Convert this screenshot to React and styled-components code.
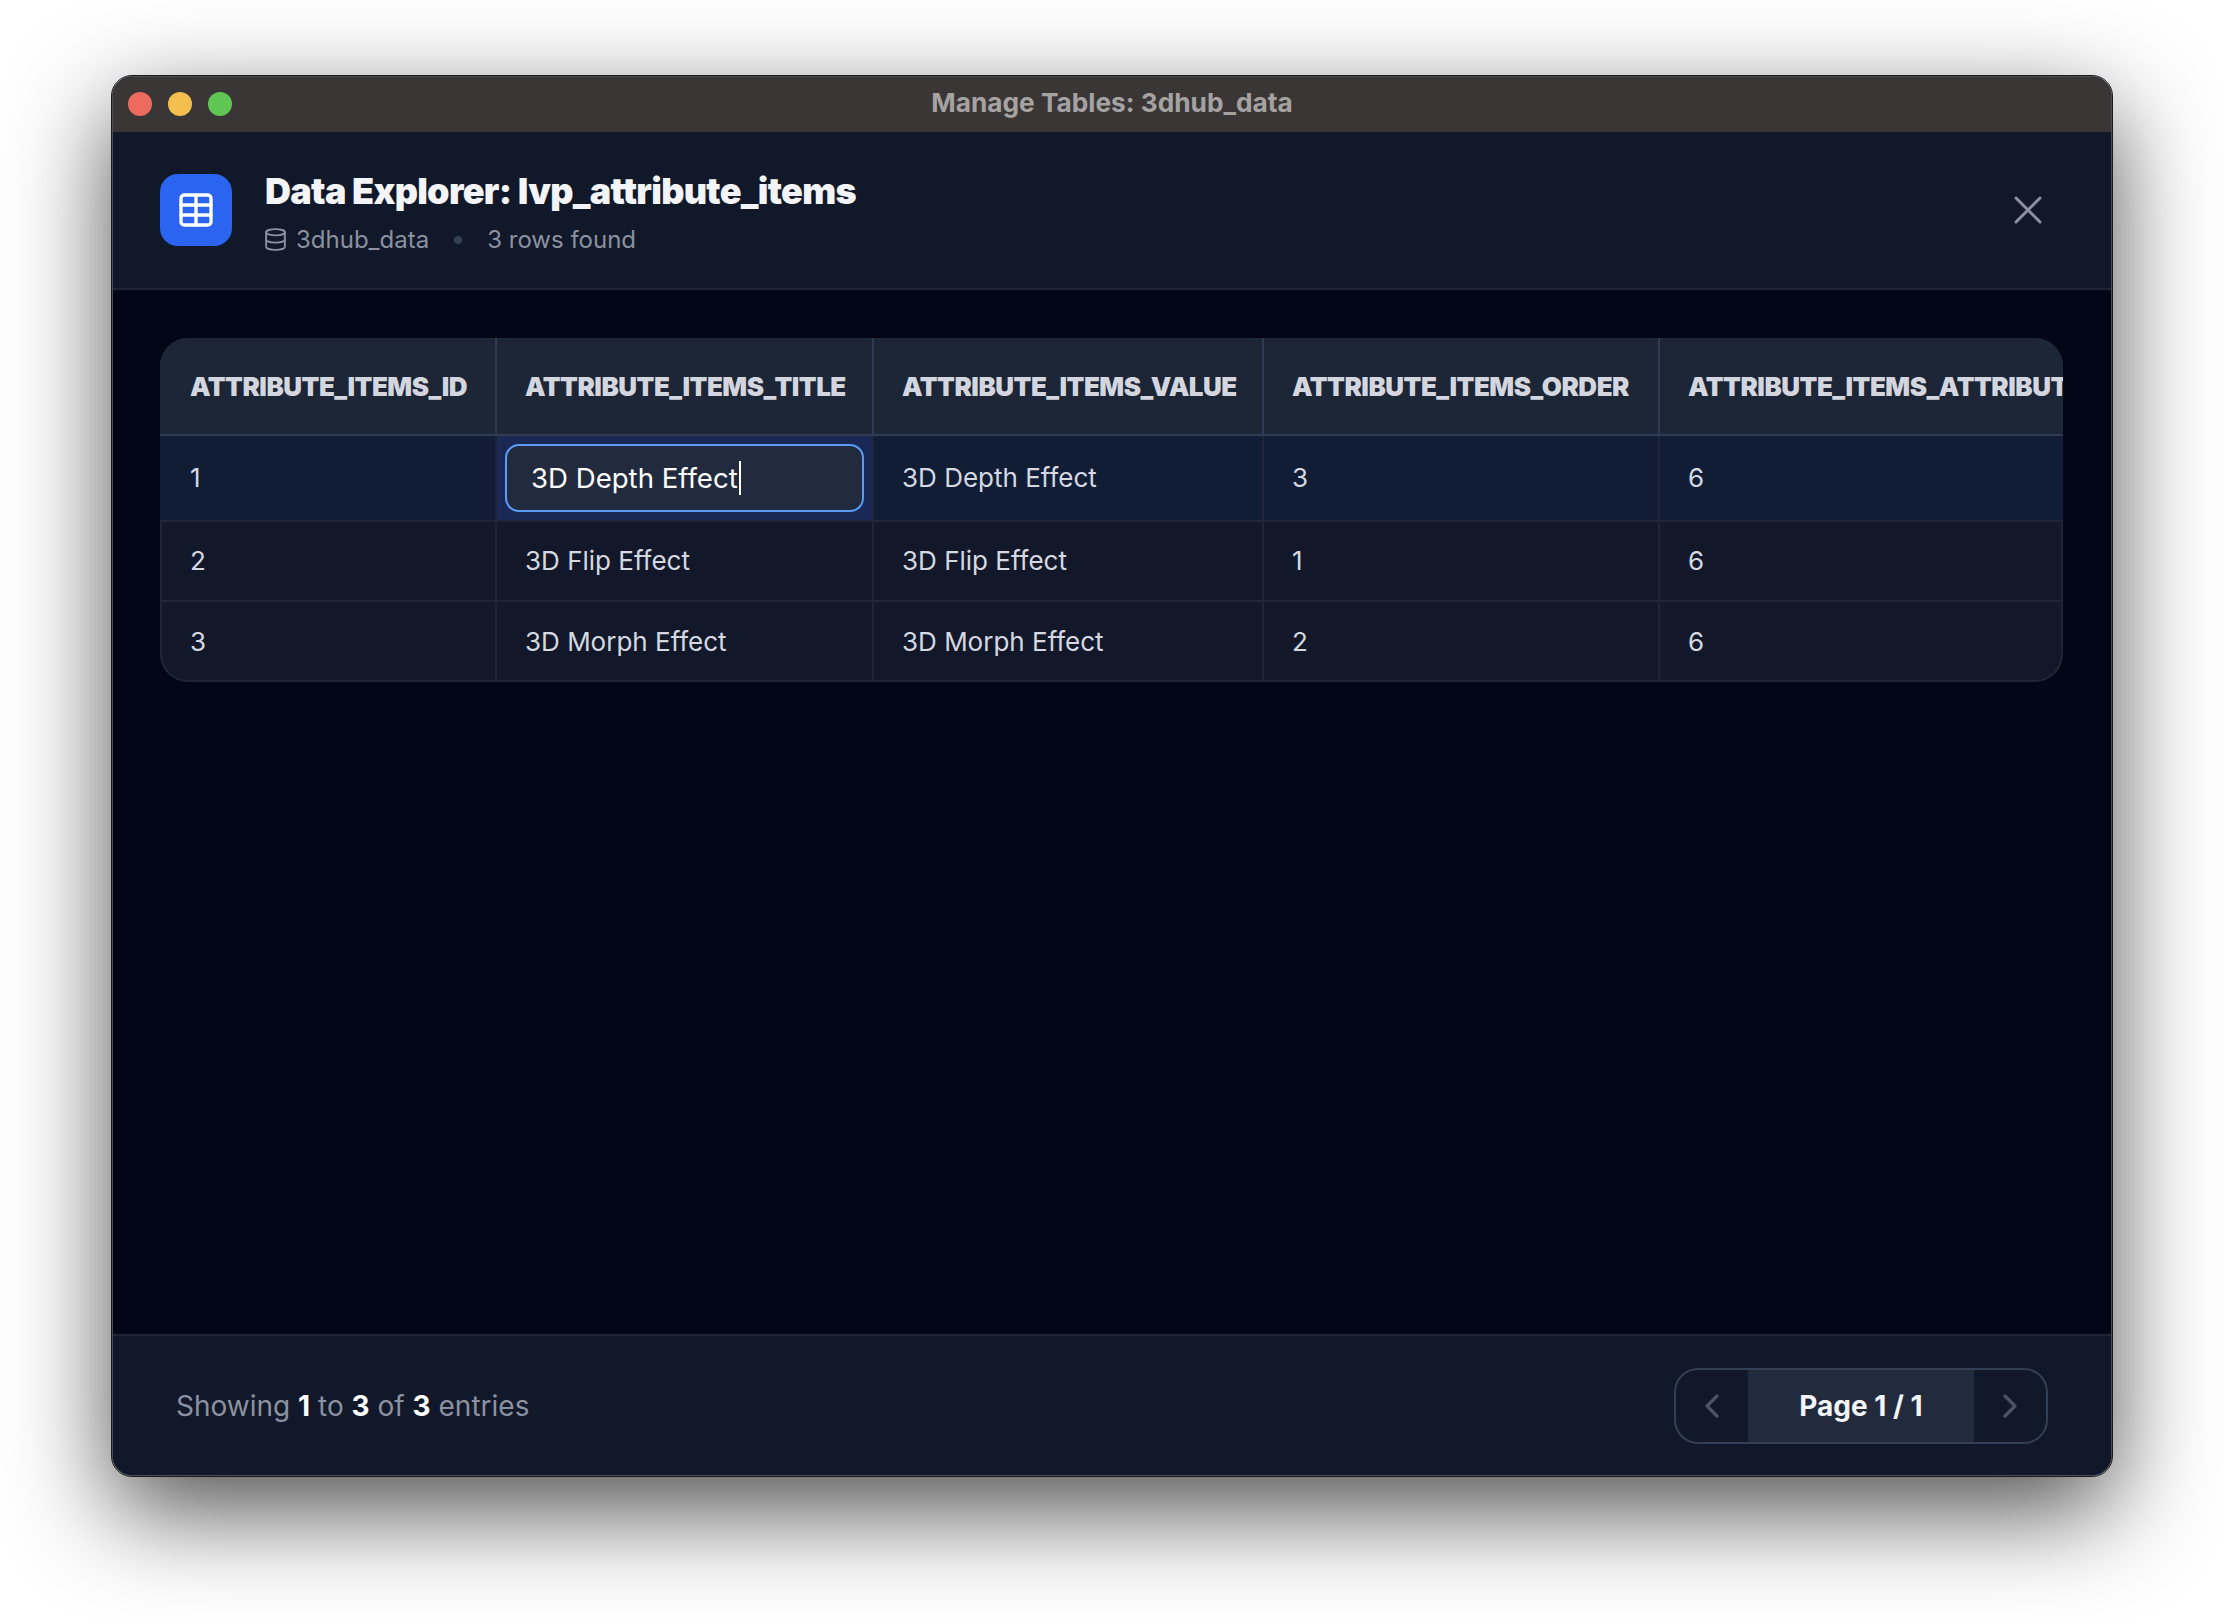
import React from 'react';
import styled, { createGlobalStyle } from 'styled-components';
import { Table, Database, X, ChevronLeft, ChevronRight } from 'lucide-react';

const Global = createGlobalStyle`
  html, body { margin: 0; padding: 0; background: #ffffff; }
  body { font-family: Inter, "Noto Sans", sans-serif; -webkit-font-smoothing: antialiased; }
`;

const Page = styled.div`
  width: 2224px;
  height: 1624px;
  box-sizing: border-box;
  padding: 76px 112px 148px 112px;
  overflow: hidden;
`;

const Window = styled.div`
  height: 100%;
  display: flex;
  flex-direction: column;
  box-sizing: border-box;
  border-radius: 20px;
  overflow: hidden;
  border: 1px solid #4a4d57;
  outline: 1px solid #1a1a1c;
  background: #020617;
  box-shadow: 0 34px 100px rgba(0, 0, 0, 0.7);
`;

const TitleBar = styled.div`
  flex: 0 0 55px;
  position: relative;
  display: flex;
  align-items: center;
  justify-content: center;
  padding-bottom: 4px;
  box-sizing: border-box;
  background: #3b3636;
`;

const Lights = styled.div`
  position: absolute;
  left: 15px;
  top: 15px;
  display: flex;
  gap: 16px;
`;

const Light = styled.span`
  width: 24px;
  height: 24px;
  border-radius: 50%;
  background: ${(p) => p.$color};
`;

const WindowTitle = styled.div`
  font-size: 26.25px;
  font-weight: 700;
  color: #a5a2a2;
`;

const Header = styled.header`
  flex: 0 0 158px;
  box-sizing: border-box;
  display: flex;
  align-items: center;
  padding: 0 59px 0 47px;
  gap: 33px;
  background: #111829;
  border-bottom: 2px solid #1e2636;
`;

const IconTile = styled.div`
  width: 72px;
  height: 72px;
  border-radius: 18px;
  background: #2b64f1;
  color: #fff;
  display: flex;
  align-items: center;
  justify-content: center;
`;

const HeaderText = styled.div`
  flex: 1;
  display: flex;
  flex-direction: column;
  gap: 9px;
  padding-top: 2px;
`;

const Title = styled.h1`
  margin: 0;
  font-size: 36px;
  line-height: 48px;
  font-weight: 900;
  letter-spacing: -0.72px;
  color: #f3f4f7;
`;

const Meta = styled.div`
  display: flex;
  align-items: center;
  font-size: 24px;
  line-height: 32px;
  color: #8b91a0;
`;

const MetaDb = styled.span`
  display: flex;
  align-items: center;
  gap: 8px;
  margin-left: -2px;
`;

const Dot = styled.span`
  width: 8px;
  height: 8px;
  border-radius: 50%;
  background: #334155;
  margin: 0 25px;
`;

const CloseButton = styled.button`
  background: none;
  border: 0;
  padding: 0;
  display: flex;
  color: #8b91a0;
`;

const Main = styled.main`
  flex: 1;
  padding: 48px 48px 48px 47px;
  background: #020617;
`;

const TableFrame = styled.div`
  border-radius: 28px;
  overflow: hidden;
  background: #121829;
  box-shadow: inset 0 0 0 2px #1e2636;
`;

const Row = styled.div`
  display: grid;
  grid-template-columns: 337px 377px 390px 396px 1fr;
  height: ${(p) => p.$h}px;
  box-sizing: border-box;
  background: ${(p) => p.$bg};
  border-bottom: ${(p) => p.$line || 'none'};
`;

const HeadCell = styled.div`
  display: flex;
  align-items: center;
  padding-left: 28px;
  font-size: 26px;
  font-weight: 900;
  letter-spacing: -0.5px;
  white-space: nowrap;
  overflow: hidden;
  color: #d3d6df;
  border-right: 2px solid #2f3b50;
  &:first-child { padding-left: 30px; }
  &:last-child { border-right: 0; }
`;

const Cell = styled.div`
  display: flex;
  align-items: center;
  padding: 0 0 2px 28px;
  font-size: 26px;
  color: #d5d8e0;
  white-space: nowrap;
  border-right: 2px solid #1e2636;
  &:first-child { padding-left: 30px; }
  &:last-child { border-right: 0; }
`;

const EditCell = styled.div`
  display: flex;
  align-items: center;
  padding: 0 8px 0 8px;
  background: #1a2855;
  border-right: 2px solid #1e2636;
`;

const EditInput = styled.div`
  flex: 1;
  height: 68px;
  box-sizing: border-box;
  display: flex;
  align-items: center;
  padding-left: 24px;
  border: 2px solid #5a9bf5;
  border-radius: 14px;
  background: #222b3d;
  color: #fff;
  font-size: 27.6px;
`;

const Caret = styled.span`
  width: 2px;
  height: 34px;
  margin-left: 1px;
  background: #fff;
`;

const Footer = styled.footer`
  flex: 0 0 141px;
  box-sizing: border-box;
  display: flex;
  align-items: center;
  justify-content: space-between;
  padding: 1px 63px 0;
  background: #111829;
  border-top: 2px solid #1e2636;
`;

const Showing = styled.div`
  font-size: 28px;
  color: #8b91a0;
  b { color: #fff; font-weight: 700; }
`;

const Pager = styled.div`
  width: 374px;
  height: 76px;
  box-sizing: border-box;
  display: grid;
  grid-template-columns: 72px 1fr 72px;
  border: 2px solid #333f54;
  border-radius: 24px;
  overflow: hidden;
`;

const PagerArrow = styled.div`
  display: flex;
  align-items: center;
  justify-content: center;
  color: #4a5263;
`;

const PagerLabel = styled.div`
  display: flex;
  align-items: center;
  justify-content: center;
  background: #222b3d;
  color: #f3f4f7;
  font-size: 28px;
  font-weight: 700;
`;

const headers = [
  'ATTRIBUTE_ITEMS_ID',
  'ATTRIBUTE_ITEMS_TITLE',
  'ATTRIBUTE_ITEMS_VALUE',
  'ATTRIBUTE_ITEMS_ORDER',
  'ATTRIBUTE_ITEMS_ATTRIBUTE_ID',
];

const rows = [
  ['2', '3D Flip Effect', '3D Flip Effect', '1', '6'],
  ['3', '3D Morph Effect', '3D Morph Effect', '2', '6'],
];

export default function App() {
  return (
    <Page>
      <Global />
      <Window>
        <TitleBar>
          <Lights>
            <Light $color="#ed6a5e" />
            <Light $color="#f4bf4f" />
            <Light $color="#61c554" />
          </Lights>
          <WindowTitle>Manage Tables: 3dhub_data</WindowTitle>
        </TitleBar>
        <Header>
          <IconTile>
            <Table size={40} strokeWidth={2} />
          </IconTile>
          <HeaderText>
            <Title>Data Explorer: lvp_attribute_items</Title>
            <Meta>
              <MetaDb>
                <Database size={25} strokeWidth={1.8} />
                3dhub_data
              </MetaDb>
              <Dot />
              <span>3 rows found</span>
            </Meta>
          </HeaderText>
          <CloseButton aria-label="Close">
            <X size={48} strokeWidth={1.5} />
          </CloseButton>
        </Header>
        <Main>
          <TableFrame>
            <Row $h={98} $bg="#1d2636" $line="2px solid #2f3b50">
              {headers.map((h) => (
                <HeadCell key={h}>{h}</HeadCell>
              ))}
            </Row>
            <Row $h={86} $bg="#111c35" $line="2px solid #1e2636">
              <Cell>1</Cell>
              <EditCell>
                <EditInput>
                  3D Depth Effect
                  <Caret />
                </EditInput>
              </EditCell>
              <Cell>3D Depth Effect</Cell>
              <Cell>3</Cell>
              <Cell>6</Cell>
            </Row>
            {rows.map((r, i) => (
              <Row key={r[0]} $h={80} $line={i === 0 ? '2px solid #1e2636' : 'none'}>
                {r.map((c, j) => (
                  <Cell key={j}>{c}</Cell>
                ))}
              </Row>
            ))}
          </TableFrame>
        </Main>
        <Footer>
          <Showing>
            Showing <b>1</b> to <b>3</b> of <b>3</b> entries
          </Showing>
          <Pager>
            <PagerArrow>
              <ChevronLeft size={40} strokeWidth={2} />
            </PagerArrow>
            <PagerLabel>Page 1 / 1</PagerLabel>
            <PagerArrow>
              <ChevronRight size={40} strokeWidth={2} />
            </PagerArrow>
          </Pager>
        </Footer>
      </Window>
    </Page>
  );
}
